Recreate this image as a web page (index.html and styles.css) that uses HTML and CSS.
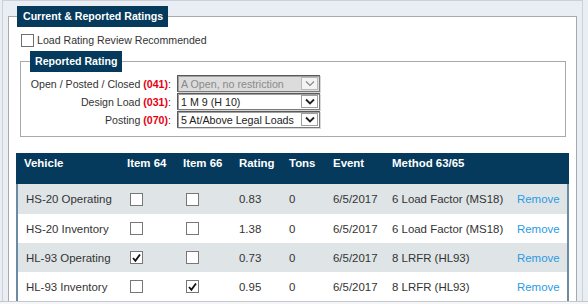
FILE: index.html
```html
<!DOCTYPE html>
<html>
<head>
<meta charset="utf-8">
<link rel="stylesheet" href="styles.css">
</head>
<body>
<div class="viewport">
  <div class="frame">
    <fieldset class="panel">
      <legend class="legend">Current &amp; Reported Ratings</legend>
      <div class="check-row"><span class="box"></span><span>Load Rating Review Recommended</span></div>
      <fieldset class="sub">
        <legend class="legend">Reported Rating</legend>
        <div class="form-grid">
          <span class="lbl">Open / Posted / Closed <b class="code">(041)</b>:</span>
          <div class="sel disabled"><span class="sel-text">A Open, no restriction</span><span class="sel-btn"><svg width="10" height="7" viewBox="0 0 10 7"><path d="M1 1.5 L5 5.5 L9 1.5" fill="none" stroke="#8a8a8a" stroke-width="1.2"/></svg></span></div>
          <span class="lbl">Design Load <b class="code">(031)</b>:</span>
          <div class="sel"><span class="sel-text">1 M 9 (H 10)</span><span class="sel-btn"><svg width="10" height="7" viewBox="0 0 10 7"><path d="M1 1.5 L5 5.5 L9 1.5" fill="none" stroke="#222" stroke-width="1.8"/></svg></span></div>
          <span class="lbl">Posting <b class="code">(070)</b>:</span>
          <div class="sel"><span class="sel-text">5 At/Above Legal Loads</span><span class="sel-btn"><svg width="10" height="7" viewBox="0 0 10 7"><path d="M1 1.5 L5 5.5 L9 1.5" fill="none" stroke="#222" stroke-width="1.8"/></svg></span></div>
        </div>
      </fieldset>
      <table class="grid">
        <colgroup>
          <col class="c-veh"><col class="c-chk"><col class="c-chk"><col class="c-rat"><col class="c-ton"><col class="c-evt"><col class="c-met"><col class="c-rem">
        </colgroup>
        <thead>
          <tr><th>Vehicle</th><th>Item 64</th><th>Item 66</th><th>Rating</th><th>Tons</th><th>Event</th><th>Method 63/65</th><th></th></tr>
        </thead>
        <tbody>
          <tr class="alt"><td>HS-20 Operating</td><td><span class="box sm"></span></td><td><span class="box sm"></span></td><td>0.83</td><td>0</td><td>6/5/2017</td><td>6 Load Factor (MS18)</td><td><a class="link">Remove</a></td></tr>
          <tr><td>HS-20 Inventory</td><td><span class="box sm"></span></td><td><span class="box sm"></span></td><td>1.38</td><td>0</td><td>6/5/2017</td><td>6 Load Factor (MS18)</td><td><a class="link">Remove</a></td></tr>
          <tr class="alt"><td>HL-93 Operating</td><td><span class="box sm"><svg width="12" height="12" viewBox="0 0 12 12"><path d="M2.2 6 L4.8 9 L9.8 2.2" fill="none" stroke="#111" stroke-width="2"/></svg></span></td><td><span class="box sm"></span></td><td>0.73</td><td>0</td><td>6/5/2017</td><td>8 LRFR (HL93)</td><td><a class="link">Remove</a></td></tr>
          <tr><td>HL-93 Inventory</td><td><span class="box sm"></span></td><td><span class="box sm"><svg width="12" height="12" viewBox="0 0 12 12"><path d="M2.2 6 L4.8 9 L9.8 2.2" fill="none" stroke="#111" stroke-width="2"/></svg></span></td><td>0.95</td><td>0</td><td>6/5/2017</td><td>8 LRFR (HL93)</td><td><a class="link">Remove</a></td></tr>
        </tbody>
      </table>
    </fieldset>
  </div>
</div>
</body>
</html>
```
FILE: styles.css
```css
* { box-sizing: border-box; }
html, body { margin: 0; padding: 0; }
body {
  background: #f4f6f8;
  font-family: "Liberation Sans", Arial, sans-serif;
  color: #333;
}
.viewport {
  height: 302px;
  overflow: hidden;
  border-bottom: 1px solid #c4c8cc;
  background: #e8eef3;
}
.frame {
  margin-left: 2px;
  width: 581px;
  min-height: 400px;
  border: 1px solid #cbd1d6;
  border-bottom: 0;
  padding: 5px 5px 0 5px;
  background: #e8eef3;
}
.panel {
  margin: 0;
  min-width: 0;
  border: 1px solid #a9a9a9;
  padding: 0 6px 20px 6px;
  background: #fff;
}
.legend {
  margin-left: 2px;
  padding: 0 5px 0 6px;
  background: #053a5c;
  color: #fff;
  font-weight: bold;
  font-size: 10.6px;
  line-height: 21px;
}
.check-row {
  display: flex;
  align-items: center;
  gap: 3px;
  margin: 5px 0 0 6px;
  height: 16px;
  font-size: 10.6px;
}
.box {
  display: inline-flex;
  align-items: center;
  justify-content: center;
  width: 13px;
  height: 13px;
  border: 1px solid #6f6f6f;
  background: #fff;
  flex: none;
}
.box.sm {
  width: 13px;
  height: 13px;
  margin-left: 3px;
  vertical-align: middle;
  border-color: #777;
}
.box svg { display: block; }
.sub {
  margin: 3px 4px 0 5px;
  min-width: 0;
  border: 1px solid #a9a9a9;
  padding: 3px 9px 8px 9px;
}
.sub .legend { margin-left: 0; padding: 0 5px; }
.form-grid {
  display: grid;
  grid-template-columns: 141px 143px;
  column-gap: 6px;
  row-gap: 1px;
  align-items: center;
  font-size: 10.6px;
}
.lbl {
  text-align: right;
  white-space: nowrap;
}
.code { color: #e8000e; }
.sel {
  display: flex;
  align-items: center;
  justify-content: space-between;
  height: 17px;
  border: 1px solid #7a7a7a;
  border-top-color: #5a5a5a;
  border-left-color: #5a5a5a;
  box-shadow: inset 1px 1px 0 #a0a0a0, 1px 1px 0 #d6d6d6;
  background: #fff;
  padding: 0 1px 0 3px;
  font-size: 10.7px;
  color: #222;
}
.sel.disabled {
  background: #dcdcdc;
  color: #8a8a8a;
}
.sel-text { white-space: nowrap; }
.sel-btn {
  display: flex;
  align-items: center;
  justify-content: center;
  width: 17px;
  height: 13px;
  border: 1px solid #9e9e9e;
  background: #fff;
}
.sel.disabled .sel-btn { background: #f3f3f3; border-color: #b8b8b8; }
.grid {
  margin: 16px 1px 0 1px;
  width: 553px;
  table-layout: fixed;
  border-collapse: separate;
  border-spacing: 0;
  font-size: 11.45px;
}
.c-veh { width: 103px; }
.c-chk { width: 56px; }
.c-rat { width: 50px; }
.c-ton { width: 44px; }
.c-evt { width: 59px; }
.c-met { width: 125px; }
.c-rem { width: 60px; }
.grid th, .grid td {
  padding: 0 0 0 8px;
  text-align: left;
  white-space: nowrap;
}
.grid thead tr { height: 31px; }
.grid th {
  background: #053a5c;
  color: #fff;
  font-weight: bold;
  vertical-align: top;
  padding-top: 3px;
  line-height: 14px;
}
.grid tbody tr { height: 29px; }
.grid tbody tr:first-child { height: 30px; }
.grid td { vertical-align: middle; }
.grid tr.alt td { background: #dfe5e7; }
.grid td:first-child { border-left: 2px solid #6b8aa3; }
.grid td:last-child { border-right: 2px solid #6b8aa3; }
.link { color: #2a9be3; }
```
